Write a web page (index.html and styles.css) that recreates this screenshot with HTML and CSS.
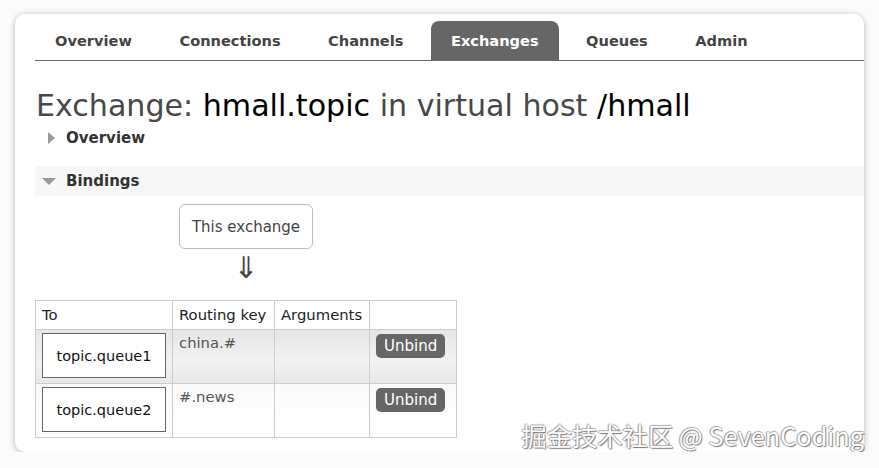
FILE: index.html
```html
<!DOCTYPE html>
<html>
<head>
<meta charset="utf-8">
<link rel="stylesheet" href="styles.css">
</head>
<body>
<div class="card">
  <ul class="tabs">
    <li class="tab">Overview</li>
    <li class="tab">Connections</li>
    <li class="tab">Channels</li>
    <li class="tab active">Exchanges</li>
    <li class="tab">Queues</li>
    <li class="tab">Admin</li>
  </ul>
  <h1 class="title"><span class="dim">Exchange:</span> hmall.topic <span class="dim">in virtual host</span> /hmall</h1>
  <div class="section closed"><span class="tri-right"></span><span class="sec-label">Overview</span></div>
  <div class="section open"><span class="tri-down"></span><span class="sec-label">Bindings</span></div>
  <div class="flow">
    <div class="exbox">This exchange</div>
    <div class="arrow">⇓</div>
  </div>
  <table class="bindings">
    <tr class="head"><th class="c1">To</th><th class="c2">Routing key</th><th class="c3">Arguments</th><th class="c4"></th></tr>
    <tr class="alt1"><td><div class="qbox">topic.queue1</div></td><td class="rk">china.#</td><td></td><td><span class="btn">Unbind</span></td></tr>
    <tr class="alt2"><td><div class="qbox">topic.queue2</div></td><td class="rk">#.news</td><td></td><td><span class="btn">Unbind</span></td></tr>
  </table>
  <div class="watermark">掘金技术社区 @ SevenCoding</div>
</div>
</body>
</html>
```
FILE: styles.css
```css
html, body { margin: 0; padding: 0; background: #fbfbfb; }
body { font-family: "DejaVu Sans", Verdana, sans-serif; color: #333; }
.card {
  position: relative;
  margin: 14px 0 0 15px;
  width: 849px;
  height: 438px;
  box-sizing: border-box;
  background: #fff;
  border-radius: 10px;
  box-shadow: 0 1px 6px rgba(0,0,0,0.28);
  padding: 7px 0 0 20px;
}
.tabs {
  list-style: none;
  margin: 0;
  padding: 0;
  display: flex;
  gap: 7.5px;
  border-bottom: 1px solid #666;
  height: 39px;
}
.tab {
  padding: 0 20px;
  line-height: 40px;
  font-weight: bold;
  font-size: 14.6px;
  color: #444;
  border-radius: 8px 8px 0 0;
}
.tab.active { background: #666; color: #fff; }
.title {
  margin: 28px 0 0 1px;
  font-weight: normal;
  font-size: 30.1px;
  line-height: 34px;
  color: #000;
}
.title .dim { color: #484848; }
.section {
  display: flex;
  align-items: center;
  height: 30px;
}
.section.closed { margin-top: 0; padding-left: 13px; }
.section.open { margin-top: 13px; background: #f7f7f7; padding-left: 7px; }
.tri-right {
  width: 0; height: 0;
  border-top: 6px solid transparent;
  border-bottom: 6px solid transparent;
  border-left: 7px solid #999;
  margin-right: 11px;
}
.tri-down {
  width: 0; height: 0;
  border-left: 7px solid transparent;
  border-right: 7px solid transparent;
  border-top: 7px solid #999;
  margin-right: 10px;
}
.sec-label { font-weight: bold; font-size: 15px; color: #333; }
.flow {
  display: flex;
  flex-direction: column;
  align-items: flex-start;
  margin: 8px 0 0 144px;
  width: 134px;
}
.exbox {
  box-sizing: border-box;
  width: 134px;
  height: 45px;
  border: 1px solid #bbb;
  border-radius: 6px;
  display: flex;
  align-items: center;
  justify-content: center;
  font-size: 15px;
  color: #444;
}
.arrow {
  align-self: center;
  font-size: 30px;
  line-height: 30px;
  margin-top: 4px;
  color: #444;
}
.bindings {
  margin-top: 17px;
  border-collapse: collapse;
  font-size: 14.8px;
  color: #222;
}
.bindings th, .bindings td {
  border: 1px solid #ccc;
  text-align: left;
  vertical-align: top;
}
.bindings th { font-weight: normal; height: 28px; line-height: 28px; padding: 0 6px; vertical-align: middle; }
.bindings td { padding: 3px 6px 5px; line-height: 20px; }
.bindings .c1 { width: 124px; }
.bindings .c2 { width: 89px; }
.bindings .c3 { width: 82px; }
.bindings .c4 { width: 74px; }
.alt1 td { background: linear-gradient(#e6e6e6, #f2f2f2 60%, #e8e8e8); }
.alt2 td { background: linear-gradient(#fafafa, #fff); }
.qbox {
  box-sizing: border-box;
  width: 124px;
  height: 45px;
  border: 1px solid #666;
  background: #fff;
  display: flex;
  align-items: center;
  justify-content: center;
  color: #111;
  font-size: 14.5px;
}
.rk { color: #555; }
.btn {
  display: inline-block;
  margin-top: 1px;
  background: #666;
  color: #fff;
  border-radius: 5px;
  padding: 0 8px;
  line-height: 24px;
  font-size: 15px;
}
.watermark {
  position: absolute;
  right: 0;
  bottom: 0;
  font-family: "Noto Sans CJK SC", "Noto Sans", sans-serif;
  font-size: 25.3px;
  line-height: 34px;
  color: #fff;
  text-shadow: 1px 1px 1px #777, -1px 0 1px #999, 0 -1px 1px #aaa;
  white-space: nowrap;
}
```
